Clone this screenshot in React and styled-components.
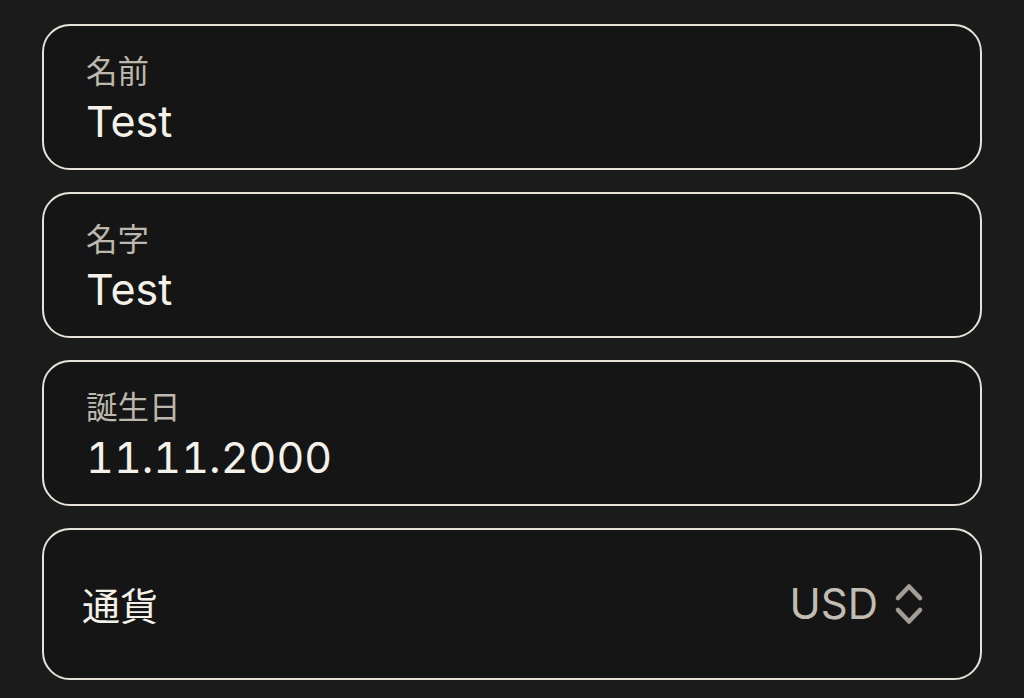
import React from "react";
import styled, { createGlobalStyle } from "styled-components";

const GlobalStyle = createGlobalStyle`
  html, body {
    margin: 0;
    padding: 0;
    background: #1b1b1b;
  }
  body {
    font-family: "Inter", "Noto Sans CJK JP", sans-serif;
    -webkit-font-smoothing: antialiased;
  }
`;

const Page = styled.div`
  width: 1024px;
  height: 698px;
  box-sizing: border-box;
  padding: 24px 42px 0;
  display: flex;
  flex-direction: column;
  gap: 22px;
  background: #1b1b1b;
`;

const Card = styled.div`
  box-sizing: border-box;
  height: ${(props) => (props.tall ? "152px" : "146px")};
  border: 2px solid #e6e2d8;
  border-radius: 28px;
  background: #151515;
  display: flex;
  flex-direction: column;
  justify-content: center;
  padding: 0 42px;
`;

const Label = styled.div`
  font-family: "Noto Sans CJK JP", sans-serif;
  font-size: 31.5px;
  line-height: 40px;
  color: #bcb8ad;
  margin-top: 2px;
`;

const Value = styled.div`
  margin-top: 6px;
  font-size: 43px;
  line-height: 52px;
  color: #f3f1ea;
  font-variant-numeric: tabular-nums;
`;

const SelectCard = styled(Card)`
  flex-direction: row;
  align-items: center;
  justify-content: space-between;
  padding: 0 56px 0 38px;
`;

const SelectLabel = styled.div`
  font-family: "Noto Sans CJK JP", sans-serif;
  font-size: 38px;
  line-height: 44px;
  color: #f3f1ea;
`;

const SelectValue = styled.div`
  display: flex;
  align-items: center;
  gap: 16px;
  color: #c2bdb2;
  font-size: 42px;
  line-height: 50px;
`;

const Chevrons = () => (
  <svg width="30" height="44" viewBox="0 0 30 44" fill="none">
    <path
      d="M4 16 L15 4.5 L26 16 M4 28 L15 39.5 L26 28"
      stroke="#a29d92"
      strokeWidth="4.6"
      strokeLinecap="round"
      strokeLinejoin="round"
    />
  </svg>
);

const fields = [
  { label: "名前", value: "Test" },
  { label: "名字", value: "Test" },
  { label: "誕生日", value: "11.11.2000" },
];

const App = () => {
  return (
    <>
      <GlobalStyle />
      <Page>
        {fields.map((f) => (
          <Card key={f.label}>
            <Label>{f.label}</Label>
            <Value>{f.value}</Value>
          </Card>
        ))}
        <SelectCard tall>
          <SelectLabel>通貨</SelectLabel>
          <SelectValue>
            USD
            <Chevrons />
          </SelectValue>
        </SelectCard>
      </Page>
    </>
  );
};

export default App;
